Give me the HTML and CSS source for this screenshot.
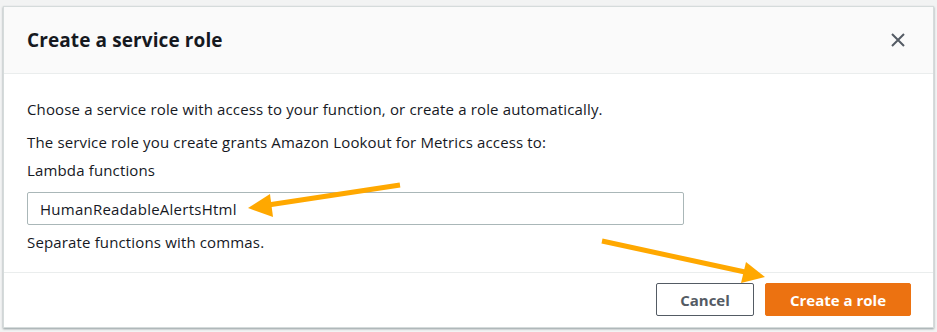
FILE: index.html
```html
<!DOCTYPE html>
<html>
<head>
    <title>Create a service role</title>
    <link rel="stylesheet" href="styles.css">
</head>
<body>
    <div class="backdrop">
        <div class="modal">
            <div class="modal-header">
                <h2>Create a service role</h2>
                <button class="close-btn" aria-label="Close">
                    <svg width="16" height="16" viewBox="0 0 16 16"><path d="M2 2 L14 14 M14 2 L2 14" stroke="#545b64" stroke-width="2" fill="none"/></svg>
                </button>
            </div>

            <div class="modal-body">
                <p class="intro">Choose a service role with access to your function, or create a role automatically.</p>
                <p class="note">The service role you create grants Amazon Lookout for Metrics access to:</p>
                <label class="field-label">Lambda functions</label>
                <input class="text-input" type="text" value="HumanReadableAlertsHtml">
                <p class="hint">Separate functions with commas.</p>
            </div>

            <div class="modal-footer">
                <button class="btn btn-normal">Cancel</button>
                <button class="btn btn-primary">Create a role</button>
            </div>
        </div>

        <!-- annotation arrows -->
        <svg class="arrows" width="937" height="332" viewBox="0 0 937 332">
            <line x1="400" y1="185" x2="268" y2="205" stroke="#ffa800" stroke-width="5"/>
            <polygon points="248,208 270,194 273,217" fill="#ffa800"/>
            <line x1="602" y1="241" x2="745" y2="272" stroke="#ffa800" stroke-width="5"/>
            <polygon points="765,277 741,283 746,262" fill="#ffa800"/>
        </svg>
    </div>
</body>
</html>
```

FILE: styles.css
```css
body { margin: 0; font-family: "Open Sans", "Liberation Sans", sans-serif; color: #16191f; }
.backdrop { position: relative; background: #f2f3f3; height: 332px; padding: 6px 3px 0; box-sizing: border-box; }
.modal { background: #fff; border: 1px solid #d5dbdb; box-shadow: 0 1px 2px rgba(0,28,36,0.4); }
.modal-header { display: flex; align-items: center; justify-content: space-between; height: 66px; padding: 0 27px 0 23px; background: #fafafa; border-bottom: 1px solid #eaeded; }
.modal-header h2 { margin: 0; font-size: 19px; font-weight: bold; letter-spacing: 0.1px; }
.close-btn { background: none; border: none; padding: 0; cursor: pointer; display: flex; }
.modal-body { padding: 25px 23px 20px; font-size: 15px; letter-spacing: 0.15px; }
.modal-body p { margin: 0; }
.intro { line-height: 20px; margin-bottom: 13px !important; }
.note { line-height: 20px; margin-bottom: 8px !important; }
.field-label { display: block; line-height: 20px; margin-bottom: 12px; }
.text-input { display: block; width: 657px; height: 33px; box-sizing: border-box; border: 1px solid #aab7b8; border-radius: 2px; padding: 0 12px; font-family: inherit; font-size: 15px; letter-spacing: 0.25px; color: #16191f; }
.hint { line-height: 20px; margin-top: 7px !important; }
.modal-footer { display: flex; justify-content: flex-end; gap: 11px; padding: 10px 22px 11px; border-top: 1px solid #eaeded; }
.btn { height: 33px; padding: 0 20px; border-radius: 2px; font-family: inherit; font-size: 15px; font-weight: bold; cursor: pointer; }
.btn-normal { width: 98px; background: #fff; border: 1px solid #545b64; color: #545b64; }
.btn-primary { width: 146px; background: #ec7211; border: 1px solid #ec7211; color: #fff; }
.arrows { position: absolute; left: 0; top: 0; pointer-events: none; }
```
